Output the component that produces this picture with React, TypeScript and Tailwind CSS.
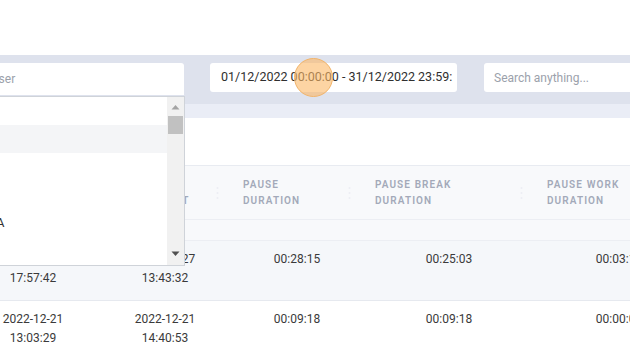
import React from 'react';

const cols = 'grid grid-cols-[132px_132px_132px_172px_168px]';

const headers = [
  ['START', 'CHECKED IN'],
  ['LAST', 'CHECKED OUT'],
  ['PAUSE', 'DURATION'],
  ['PAUSE BREAK', 'DURATION'],
  ['PAUSE WORK', 'DURATION'],
];

const rows = [
  {
    cells: [
      ['2022-12-20', '17:57:42'],
      ['2022-12-27', '13:43:32'],
      ['00:28:15'],
      ['00:25:03'],
      ['00:03:12'],
    ],
    shaded: true,
  },
  {
    cells: [
      ['2022-12-21', '13:03:29'],
      ['2022-12-21', '14:40:53'],
      ['00:09:18'],
      ['00:09:18'],
      ['00:00:00'],
    ],
    shaded: false,
  },
];

const users = ['All', 'Admin', 'John Doe', 'Manager', 'NGUYEN VAN A', 'Tran Binh'];

const Handle = () => (
  <svg width="3" height="14" viewBox="0 0 3 14" className="shrink-0">
    <circle cx="1.5" cy="2" r="1" fill="#eceef3" />
    <circle cx="1.5" cy="7" r="1" fill="#eceef3" />
    <circle cx="1.5" cy="12" r="1" fill="#eceef3" />
  </svg>
);

const UserDropdown = () => (
  <div className="absolute top-[96px] left-[-100px] w-[285px] h-[170px] bg-white border border-[#cfd3d9] flex">
    <div className="flex-1 flex flex-col">
      {users.map((u, i) => (
        <div
          key={u}
          className={`h-[28px] flex items-center pl-[12px] text-[13px] text-[#333] ${i === 1 ? 'bg-[#f4f5f7]' : ''}`}
        >
          {u}
        </div>
      ))}
    </div>
    <div className="w-[17px] bg-[#f1f1f1] flex flex-col items-center">
      <svg width="9" height="6" viewBox="0 0 9 6" className="mt-[7px]">
        <path d="M0.5 5.5 L4.5 1 L8.5 5.5 Z" fill="#a3a3a3" />
      </svg>
      <div className="mt-[6px] w-[15px] h-[18px] bg-[#c1c1c1]" />
      <div className="flex-1" />
      <svg width="9" height="6" viewBox="0 0 9 6" className="mb-[8px]">
        <path d="M0.5 0.5 L8.5 0.5 L4.5 5 Z" fill="#505050" />
      </svg>
    </div>
  </div>
);

export default function App() {
  return (
    <div className="relative w-[630px] h-[354px] overflow-hidden bg-white font-['Roboto',sans-serif]">
      <div className="h-[55px] bg-white" />

      <div className="h-[49px] bg-[#dee2ed] flex items-start pt-[8px]">
        <div className="shrink-0 w-[184px] h-[32px] bg-white rounded-tr-[3px] overflow-hidden flex items-center">
          <span className="-ml-[44px] whitespace-nowrap text-[12px] text-[#9ba1ab]">Select user</span>
        </div>
        <div className="shrink-0 ml-[26px] w-[247px] h-[29px] bg-white rounded-[3px] px-[11px] overflow-hidden flex items-center">
          <span className="whitespace-nowrap text-[12.5px] text-[#2f2f2f]">01/12/2022 00:00:00 - 31/12/2022 23:59:</span>
        </div>
        <div className="shrink-0 ml-[27px] w-[200px] h-[29px] bg-white rounded-[3px] px-[10px] flex items-center">
          <span className="whitespace-nowrap text-[12px] text-[#9ba1ab]">Search anything...</span>
        </div>
      </div>

      <div className="h-[14px] bg-[#eaedf6]" />
      <div className="h-[47px] bg-white" />

      <div className="-ml-[33px] border-t border-[#e8ebf1]">
        <div className={`${cols} h-[54px] bg-[#f8f9fb] border-b border-[#eceef3]`}>
          {headers.map((h, i) => (
            <div key={i} className="flex items-center justify-between pl-[12px] pr-[12px]">
              <div className="text-[10px] font-semibold tracking-[1.1px] leading-[16px] text-[#a3a9b9]">
                <div>{h[0]}</div>
                <div>{h[1]}</div>
              </div>
              <Handle />
            </div>
          ))}
        </div>
        <div className="h-[21px] bg-[#f8f9fb] border-b border-[#eceef3]" />
        {rows.map((r, ri) => (
          <div
            key={ri}
            className={`${cols} pt-[9px] pb-[12px] border-b border-[#e6e9ef] ${r.shaded ? 'bg-[#f5f7fa]' : 'bg-white'}`}
          >
            {r.cells.map((c, ci) => (
              <div key={ci} className="text-center text-[12px] leading-[19px] text-[#3a3a3a]">
                {c.map((line) => (
                  <div key={line}>{line}</div>
                ))}
              </div>
            ))}
          </div>
        ))}
      </div>

      <UserDropdown />

      <div className="absolute left-[294px] top-[58px] w-[39px] h-[39px] rounded-full bg-[#fbb765]/60 border border-[#f2b46a]" />
    </div>
  );
}
